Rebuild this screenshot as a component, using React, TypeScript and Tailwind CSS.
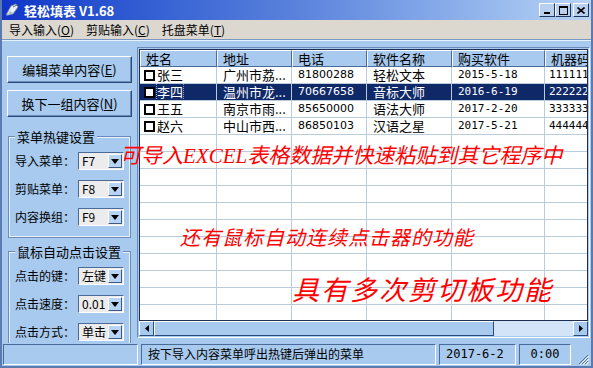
import React from "react";

const rows = [
  { name: "张三", addr: "广州市荔...", tel: "81800288", soft: "轻松文本", date: "2015-5-18", code: "111111" },
  { name: "李四", addr: "温州市龙...", tel: "70667658", soft: "音标大师", date: "2016-6-19", code: "222222" },
  { name: "王五", addr: "南京市雨...", tel: "85650000", soft: "语法大师", date: "2017-2-20", code: "333333" },
  { name: "赵六", addr: "中山市西...", tel: "86850103", soft: "汉语之星", date: "2017-5-21", code: "444444" },
];

const cols = [
  { title: "姓名", w: "w-[77px]" },
  { title: "地址", w: "w-[75px]" },
  { title: "电话", w: "w-[75px]" },
  { title: "软件名称", w: "w-[85px]" },
  { title: "购买软件", w: "w-[93px]" },
  { title: "机器码", w: "w-[80px]" },
];

const font = { fontFamily: '"Noto Sans CJK SC", "DejaVu Sans", sans-serif' };
const red = { fontFamily: '"Liberation Serif", "Noto Sans CJK SC", serif' };
const mono = { fontFamily: '"DejaVu Sans Mono", monospace' };

const Combo = ({ value }: { value: string }) => (
  <div className="flex h-[18px] w-[46px] shrink-0 items-center border border-t-[#4a6a98] border-l-[#4a6a98] border-r-white border-b-white bg-[#ececec]">
    <span className="flex-1 whitespace-nowrap pl-[3px] text-[12px] leading-none text-black">{value}</span>
    <span className="mr-[1px] flex h-[14px] w-[14px] items-center justify-center border border-t-white border-l-white border-r-[#3a5a88] border-b-[#3a5a88] bg-[#b8d4f4]">
      <svg width="8" height="5" viewBox="0 0 8 5">
        <path d="M0 0h8L4 5z" fill="#000" />
      </svg>
    </span>
  </div>
);

const Group = ({ title, items }: { title: string; items: [string, string][] }) => (
  <div className="relative mx-[7px] border border-[#e8f2fc] px-[5px] pt-[14px] outline outline-1 outline-[#6a8ab8]">
    <span className="absolute -top-[9px] left-[5px] whitespace-nowrap bg-[#a8caee] px-[2px] text-[13px] leading-[16px] text-black">
      {title}
    </span>
    <div className="flex flex-col gap-[10px] pb-[10px]">
      {items.map(([label, v]) => (
        <div key={label} className="flex items-center justify-between">
          <span className="whitespace-nowrap text-[12px] leading-none text-black">{label}</span>
          <Combo value={v} />
        </div>
      ))}
    </div>
  </div>
);

const Btn = ({ children }: { children: React.ReactNode }) => (
  <div className="flex h-[27px] w-[125px] items-center justify-center border border-t-white border-l-white border-r-[#2a4a7a] border-b-[#2a4a7a] bg-[#a8caee] text-[13px] text-black shadow-[inset_-1px_-1px_0_#6a8ab8]">
    {children}
  </div>
);

export default function App() {
  return (
    <div
      className="flex h-[368px] w-[593px] flex-col overflow-hidden border-x-[2px] border-b-[2px] border-[#5a7ab0] bg-[#a8caee]"
      style={font}
    >
      {/* title bar */}
      <div className="flex h-[20px] shrink-0 items-center bg-gradient-to-r from-[#1234c8] via-[#5a82dc] to-[#b8d4f4] px-[2px]">
        <svg width="16" height="16" viewBox="0 0 16 16" className="mr-[4px]">
          <path d="M2 13 L7 4 L12 2 L14 5 L9 12 Z" fill="#e8eef8" stroke="#7a8aa0" strokeWidth="0.8" />
          <path d="M3 14 L6 9 L9 11 Z" fill="#b0bccc" />
          <path d="M9 5 L13 3" stroke="#5a6a80" strokeWidth="1" />
        </svg>
        <span className="text-[13px] font-bold leading-none text-white">轻松填表 V1.68</span>
        <div className="ml-auto flex items-center">
          {["min", "max", "close"].map((k) => (
            <div
              key={k}
              className={`flex h-[14px] w-[16px] items-center justify-center border border-t-white border-l-white border-r-[#203860] border-b-[#203860] bg-[#b8d0ee] ${k === "close" ? "ml-[2px]" : ""}`}
            >
              {k === "min" && <div className="mt-[6px] h-[2px] w-[6px] bg-black" />}
              {k === "max" && <div className="h-[9px] w-[9px] border border-t-2 border-black" />}
              {k === "close" && (
                <svg width="8" height="7" viewBox="0 0 8 7">
                  <path d="M0.5 0.5L7.5 6.5M7.5 0.5L0.5 6.5" stroke="#000" strokeWidth="1.6" />
                </svg>
              )}
            </div>
          ))}
        </div>
      </div>

      {/* menu bar */}
      <div className="flex h-[19px] shrink-0 items-center gap-[12px] bg-[#dcd8d0] pl-[7px] text-[12px] text-black">
        <span>导入输入(<u>O</u>)</span>
        <span>剪贴输入(<u>C</u>)</span>
        <span>托盘菜单(<u>T</u>)</span>
      </div>
      <div className="h-[1px] shrink-0 bg-[#7a98c4]" />
      <div className="h-[1px] shrink-0 bg-[#e8f2fc]" />

      {/* main */}
      <div className="relative flex min-h-0 flex-1">
        <div className="flex w-[135px] shrink-0 flex-col overflow-hidden">
          <div className="ml-[5px] mt-[15px] flex flex-col gap-[7px]">
            <Btn>编辑菜单内容(<u>E</u>)</Btn>
            <Btn>换下一组内容(<u>N</u>)</Btn>
          </div>
          <div className="mt-[20px]">
            <Group
              title="菜单热键设置"
              items={[
                ["导入菜单：", "F7"],
                ["剪贴菜单：", "F8"],
                ["内容换组：", "F9"],
              ]}
            />
          </div>
          <div className="mt-[15px]">
            <Group
              title="鼠标自动点击设置"
              items={[
                ["点击的键：", "左键"],
                ["点击速度：", "0.01"],
                ["点击方式：", "单击"],
              ]}
            />
          </div>
        </div>

        {/* table */}
        <div className="mb-[5px] mr-[1px] mt-[6px] flex min-w-0 flex-1 flex-col border border-t-[#6a8ab8] border-l-[#6a8ab8] border-r-white border-b-white p-[1px]">
          <div className="min-h-0 flex-1 overflow-hidden border border-[#1e2e50] bg-white">
            <div className="flex h-[17px] bg-[#a8caee]">
              {cols.map((c) => (
                <div
                  key={c.title}
                  className={`${c.w} shrink-0 whitespace-nowrap border border-t-white border-l-white border-r-[#4a6a98] border-b-[#4a6a98] pl-[5px] text-[13px] leading-[15px] text-black`}
                >
                  {c.title}
                </div>
              ))}
            </div>
            {Array.from({ length: 16 }).map((_, i) => {
              const r = rows[i];
              const sel = i === 1;
              return (
                <div
                  key={i}
                  className={`flex h-[17px] border-b border-[#b8ccdc] text-[12px] leading-[16px] ${sel ? "bg-[#0e2868] text-white" : "text-black"}`}
                >
                  {cols.map((c, j) => (
                    <div
                      key={j}
                      className={`${c.w} flex shrink-0 items-center overflow-hidden whitespace-nowrap border-r border-[#b8ccdc] ${j === 0 ? "pl-[4px]" : j === 5 ? "pl-[4px]" : "pl-[6px]"}`}
                    >
                      {r && j === 0 && (
                        <>
                          <span className="mr-[2px] h-[11px] w-[11px] shrink-0 border-2 border-black bg-white" />
                          <span className={`text-[13px] ${sel ? "outline outline-1 outline-dotted outline-[#8aa0c8]" : ""}`}>{r.name}</span>
                        </>
                      )}
                      {r && j === 1 && <span className="text-[13px]">{r.addr}</span>}
                      {r && j === 2 && <span style={{ fontFamily: '"DejaVu Sans", sans-serif' }} className="text-[11px]">{r.tel}</span>}
                      {r && j === 3 && <span className="text-[13px]">{r.soft}</span>}
                      {r && j === 4 && <span style={mono} className="text-[11px]">{r.date}</span>}
                      {r && j === 5 && <span style={mono} className="text-[11px]">{r.code}</span>}
                    </div>
                  ))}
                </div>
              );
            })}
          </div>
          {/* scrollbar */}
          <div className="flex h-[15px] shrink-0 bg-[#d4e4f8]">
            <div className="flex w-[15px] items-center justify-center border border-t-white border-l-white border-r-[#2a4a7a] border-b-[#2a4a7a] bg-[#a8caee]">
              <svg width="4" height="7" viewBox="0 0 4 7"><path d="M4 0v7L0 3.5z" fill="#000" /></svg>
            </div>
            <div className="w-[340px] border border-t-white border-l-white border-r-[#2a4a7a] border-b-[#2a4a7a] bg-[#a8caee]" />
            <div className="flex-1" />
            <div className="flex w-[15px] items-center justify-center border border-t-white border-l-white border-r-[#2a4a7a] border-b-[#2a4a7a] bg-[#a8caee]">
              <svg width="4" height="7" viewBox="0 0 4 7"><path d="M0 0v7L4 3.5z" fill="#000" /></svg>
            </div>
          </div>
        </div>

        {/* red promo text overlaid */}
        <div className="pointer-events-none absolute left-[118px] top-[105px] whitespace-nowrap text-[21px] italic leading-none text-[#ff0000]" style={red}>
          可导入EXCEL表格数据并快速粘贴到其它程序中
        </div>
        <div className="pointer-events-none absolute left-[178px] top-[187px] whitespace-nowrap text-[20px] italic leading-none tracking-[1px] text-[#ff0000]" style={red}>
          还有鼠标自动连续点击器的功能
        </div>
        <div className="pointer-events-none absolute left-[290px] top-[237px] whitespace-nowrap text-[27px] italic leading-none tracking-[2px] text-[#ff0000]" style={red}>
          具有多次剪切板功能
        </div>
      </div>

      {/* status bar */}
      <div className="flex h-[23px] shrink-0 items-center gap-[3px] pb-[1px] pl-[1px] text-[12px] text-black">
        <div className="h-[21px] w-[135px] border border-t-[#4a6a98] border-l-[#4a6a98] border-r-white border-b-white" />
        <div className="flex h-[21px] w-[295px] items-center whitespace-nowrap border border-t-[#4a6a98] border-l-[#4a6a98] border-r-white border-b-white pl-[6px]">
          按下导入内容菜单呼出热键后弹出的菜单
        </div>
        <div className="flex h-[21px] w-[77px] items-center border border-t-[#4a6a98] border-l-[#4a6a98] border-r-white border-b-white pl-[6px]" style={mono}>
          2017-6-2
        </div>
        <div className="flex h-[21px] w-[52px] items-center justify-center border border-t-[#4a6a98] border-l-[#4a6a98] border-r-white border-b-white" style={mono}>
          0:00
        </div>
        <svg width="12" height="12" viewBox="0 0 12 12" className="ml-auto mr-[2px] self-end">
          <path d="M11 2L2 11M11 5L5 11M11 8L8 11" stroke="#4a6a98" strokeWidth="1" />
          <path d="M12 3L3 12M12 6L6 12M12 9L9 12" stroke="#ffffff" strokeWidth="1" />
        </svg>
      </div>
    </div>
  );
}
